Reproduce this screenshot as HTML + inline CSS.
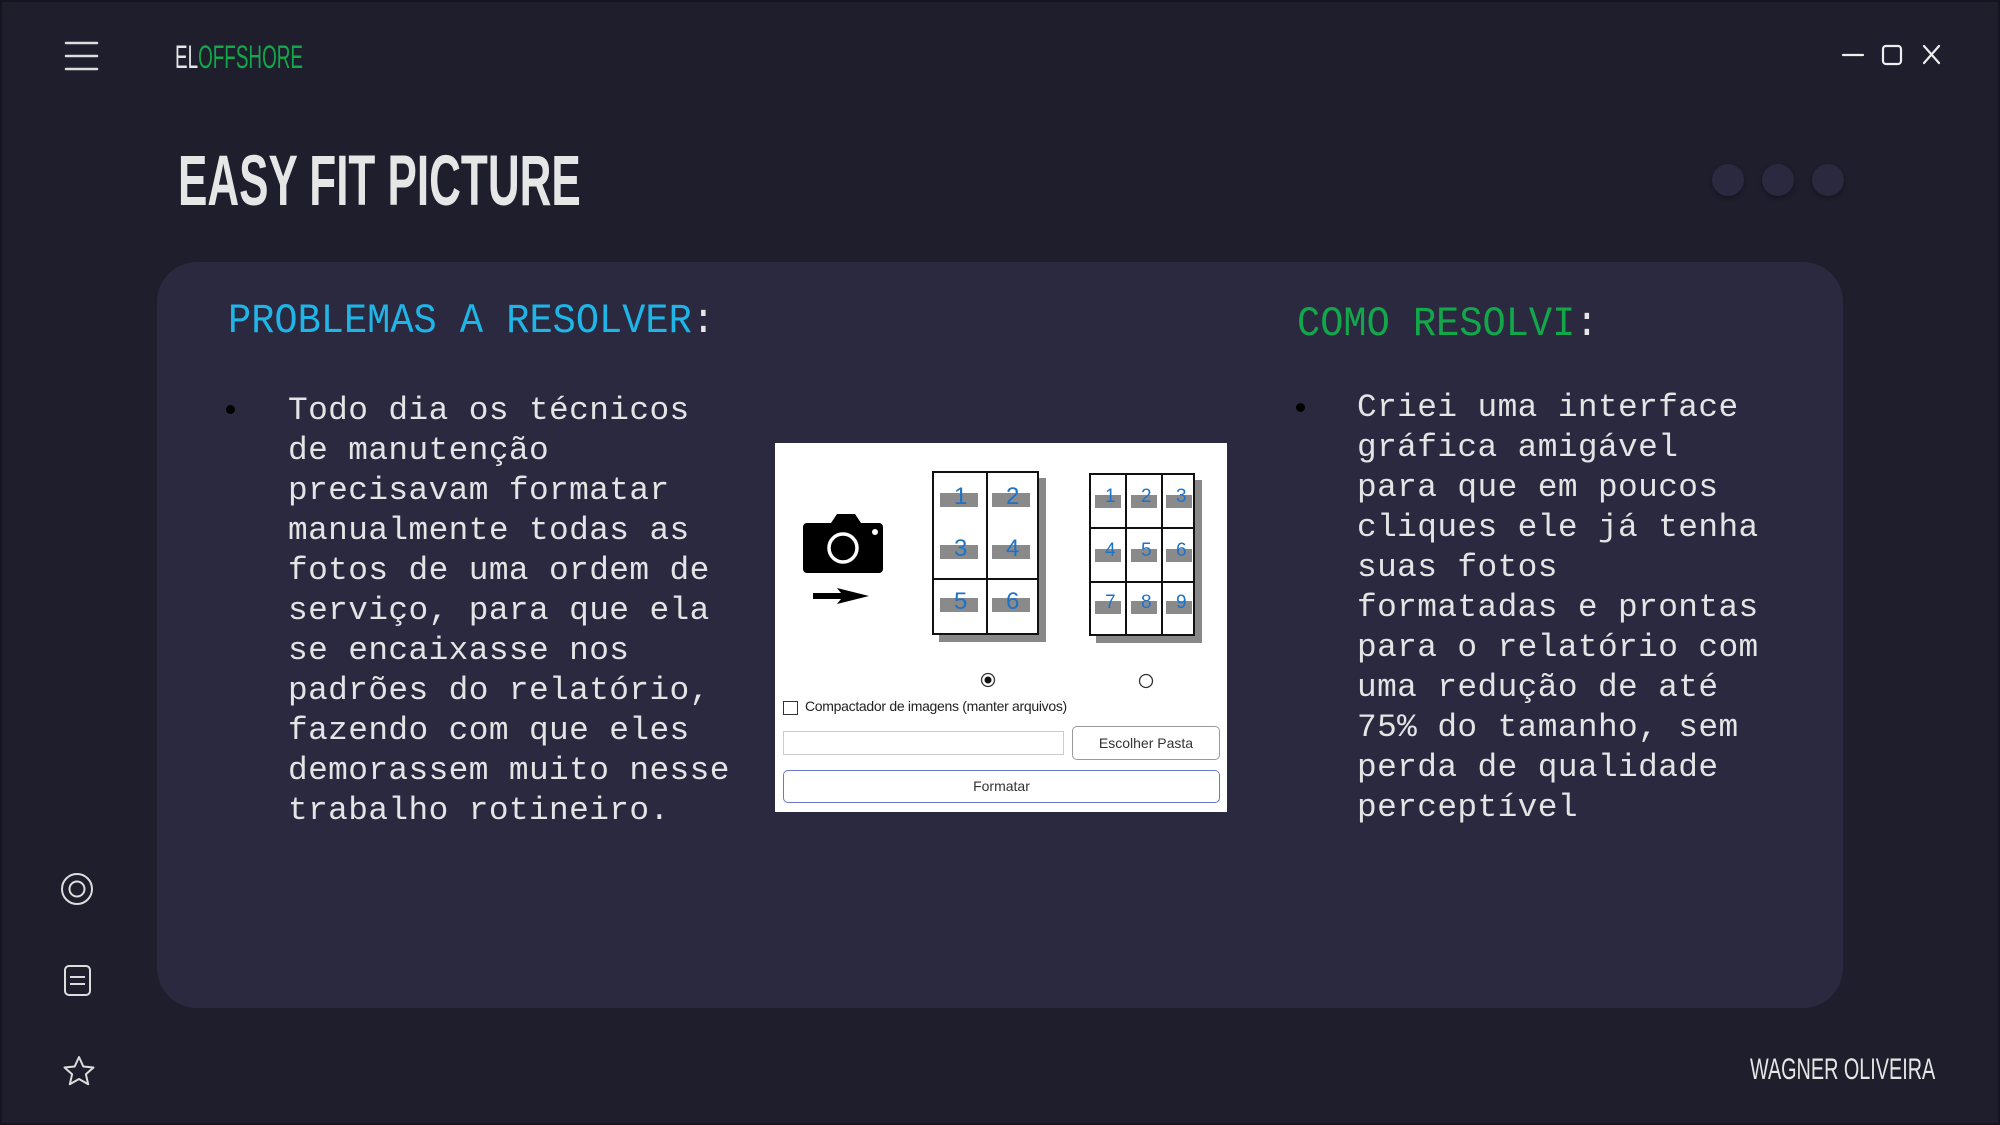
<!DOCTYPE html>
<html><head><meta charset="utf-8"><style>
*{margin:0;padding:0;box-sizing:border-box}
body{width:2000px;height:1125px;background:#1f1e2d;position:relative;overflow:hidden;font-family:"Liberation Sans",sans-serif;border:2px solid #15141f}
.a{position:absolute}
.cond{transform-origin:0 0;white-space:nowrap}
.mono{font-family:"Liberation Mono",monospace;white-space:pre;color:#e4e4e4;font-size:32.8px;line-height:40px;letter-spacing:0.4px}
.dot{width:32px;height:32px;border-radius:50%;background:#2a2940;box-shadow:0 2px 5px rgba(0,0,0,.35)}
.pg{background:#fff;border:2px solid #111;box-shadow:7px 7px 0 #888}
.cell{position:absolute;color:#1e73c8;font-size:24px;font-family:"Liberation Sans",sans-serif}
.bar{position:absolute;background:#8a8a8a}
</style></head><body>
<svg class="a" style="left:62px;top:38px" width="36" height="34"><g stroke="#ddd" stroke-width="2.5" stroke-linecap="round"><line x1="2" y1="3" x2="33" y2="3"/><line x1="2" y1="16" x2="33" y2="16"/><line x1="2" y1="29" x2="33" y2="29"/></g></svg>
<div class="a cond" style="left:173px;top:37px;font-size:32px;transform:scaleX(0.59);color:#e6e6e6">EL<span style="color:#12a84a">OFFSHORE</span></div>
<div class="a cond" style="left:176px;top:139px;font-size:71px;font-weight:bold;color:#e6e6e6;transform:scaleX(0.62)">EASY FIT PICTURE</div>
<svg class="a" style="left:1836px;top:38px" width="110" height="30"><g stroke="#eee" stroke-width="2.2" fill="none" stroke-linecap="round"><line x1="5" y1="15" x2="25" y2="15"/><rect x="45" y="6" width="18" height="18" rx="3"/><line x1="86" y1="6" x2="101" y2="23"/><line x1="101" y1="6" x2="86" y2="23"/></g></svg>
<div class="a dot" style="left:1710px;top:162px"></div>
<div class="a dot" style="left:1760px;top:162px"></div>
<div class="a dot" style="left:1810px;top:162px"></div>
<div class="a" style="left:155px;top:260px;width:1686px;height:746px;background:#2a2940;border-radius:40px"></div>
<div class="a mono cond" style="left:226px;top:295px;font-size:42px;line-height:48px;letter-spacing:0;color:#1fb5e6;transform:scaleX(0.92)">PROBLEMAS A RESOLVER<span style="color:#e6e6e6">:</span></div>
<div class="a mono cond" style="left:1295px;top:298px;font-size:42px;line-height:48px;letter-spacing:0;color:#12a84a;transform:scaleX(0.92)">COMO RESOLVI<span style="color:#e6e6e6">:</span></div>
<div class="a" style="left:224px;top:403px;width:9px;height:9px;border-radius:50%;background:#000"></div>
<div class="a mono" style="left:286px;top:389px">Todo dia os técnicos
de manutenção
precisavam formatar
manualmente todas as
fotos de uma ordem de
serviço, para que ela
se encaixasse nos
padrões do relatório,
fazendo com que eles
demorassem muito nesse
trabalho rotineiro.</div>
<div class="a" style="left:1294px;top:401px;width:9px;height:9px;border-radius:50%;background:#000"></div>
<div class="a mono" style="left:1355px;top:386px">Criei uma interface
gráfica amigável
para que em poucos
cliques ele já tenha
suas fotos
formatadas e prontas
para o relatório com
uma redução de até
75% do tamanho, sem
perda de qualidade
perceptível</div>
<div class="a" style="left:773px;top:441px;width:452px;height:369px;background:#fff;overflow:hidden">
 <svg class="a" style="left:28px;top:70px" width="84" height="94"><path d="M8 10h20l6-9h18l6 9h18a4 4 0 0 1 4 4v42a4 4 0 0 1-4 4H4a4 4 0 0 1-4-4V14a4 4 0 0 1 4-4z" fill="#000"/><circle cx="40" cy="35" r="14" fill="none" stroke="#fff" stroke-width="3.5"/><circle cx="72" cy="19" r="3" fill="#fff"/><path d="M10 80h28l-4-5 32 8-32 8 4-5H10z" fill="#000"/></svg>
 <div class="a pg" style="left:157px;top:28px;width:107px;height:164px">
  <div class="a" style="left:52px;top:0;width:2px;height:160px;background:#111"></div>
  <div class="a" style="left:0;top:105px;width:105px;height:2px;background:#111"></div>
  <div class="bar" style="left:6px;top:20px;width:38px;height:14px"></div><div class="cell" style="left:20px;top:10px">1</div>
  <div class="bar" style="left:58px;top:20px;width:38px;height:14px"></div><div class="cell" style="left:72px;top:10px">2</div>
  <div class="bar" style="left:6px;top:72px;width:38px;height:14px"></div><div class="cell" style="left:20px;top:62px">3</div>
  <div class="bar" style="left:58px;top:72px;width:38px;height:14px"></div><div class="cell" style="left:72px;top:62px">4</div>
  <div class="bar" style="left:6px;top:125px;width:38px;height:14px"></div><div class="cell" style="left:20px;top:115px">5</div>
  <div class="bar" style="left:58px;top:125px;width:38px;height:14px"></div><div class="cell" style="left:72px;top:115px">6</div>
 </div>
 <div class="a pg" style="left:314px;top:30px;width:106px;height:163px">
  <div class="a" style="left:34px;top:0;width:2px;height:160px;background:#111"></div>
  <div class="a" style="left:70px;top:0;width:2px;height:160px;background:#111"></div>
  <div class="a" style="left:0;top:52px;width:104px;height:2px;background:#111"></div>
  <div class="a" style="left:0;top:106px;width:104px;height:2px;background:#111"></div>
  <div class="bar" style="left:4px;top:20px;width:26px;height:13px"></div><div class="cell" style="left:14px;top:11px;font-size:19px">1</div>
  <div class="bar" style="left:40px;top:20px;width:26px;height:13px"></div><div class="cell" style="left:50px;top:11px;font-size:19px">2</div>
  <div class="bar" style="left:75px;top:20px;width:26px;height:13px"></div><div class="cell" style="left:85px;top:11px;font-size:19px">3</div>
  <div class="bar" style="left:4px;top:74px;width:26px;height:13px"></div><div class="cell" style="left:14px;top:65px;font-size:19px">4</div>
  <div class="bar" style="left:40px;top:74px;width:26px;height:13px"></div><div class="cell" style="left:50px;top:65px;font-size:19px">5</div>
  <div class="bar" style="left:75px;top:74px;width:26px;height:13px"></div><div class="cell" style="left:85px;top:65px;font-size:19px">6</div>
  <div class="bar" style="left:4px;top:126px;width:26px;height:13px"></div><div class="cell" style="left:14px;top:117px;font-size:19px">7</div>
  <div class="bar" style="left:40px;top:126px;width:26px;height:13px"></div><div class="cell" style="left:50px;top:117px;font-size:19px">8</div>
  <div class="bar" style="left:75px;top:126px;width:26px;height:13px"></div><div class="cell" style="left:85px;top:117px;font-size:19px">9</div>
 </div>
 <svg class="a" style="left:205px;top:229px" width="16" height="16"><circle cx="8" cy="8" r="6.5" fill="#fff" stroke="#333" stroke-width="1.3"/><circle cx="8" cy="8" r="3.5" fill="#111"/></svg>
 <svg class="a" style="left:363px;top:230px" width="16" height="16"><circle cx="8" cy="8" r="6.5" fill="#fff" stroke="#333" stroke-width="1.3"/></svg>
 <div class="a" style="left:8px;top:258px;width:15px;height:14px;border:1.5px solid #333"></div>
 <div class="a" style="left:30px;top:255px;font-size:14px;color:#222;white-space:nowrap;letter-spacing:-0.3px">Compactador de imagens (manter arquivos)</div>
 <div class="a" style="left:8px;top:288px;width:281px;height:24px;border:1px solid #ccc"></div>
 <div class="a" style="left:297px;top:283px;width:148px;height:34px;border:1.5px solid #999;border-radius:5px;font-size:14px;color:#333;text-align:center;line-height:32px">Escolher Pasta</div>
 <div class="a" style="left:8px;top:327px;width:437px;height:33px;border:1.5px solid #6a78c8;border-radius:5px;font-size:14px;color:#333;text-align:center;line-height:31px">Formatar</div>
</div>
<svg class="a" style="left:56px;top:868px" width="40" height="220"><g stroke="#ddd" stroke-width="2" fill="none" stroke-linejoin="round"><circle cx="19" cy="19" r="15"/><circle cx="19" cy="19" r="7.5"/><rect x="7" y="96" width="25" height="29" rx="4"/><line x1="12" y1="107" x2="27" y2="107"/><line x1="12" y1="114" x2="27" y2="114"/><path d="M21 187l4.3 9.5 10.2 1-7.6 6.8 2.3 10-9.2-5.3-9.2 5.3 2.3-10-7.6-6.8 10.2-1z"/></g></svg>
<div class="a cond" style="left:1748px;top:1051px;font-size:30px;color:#e6e6e6;transform:scaleX(0.66)">WAGNER OLIVEIRA</div>
</body></html>
